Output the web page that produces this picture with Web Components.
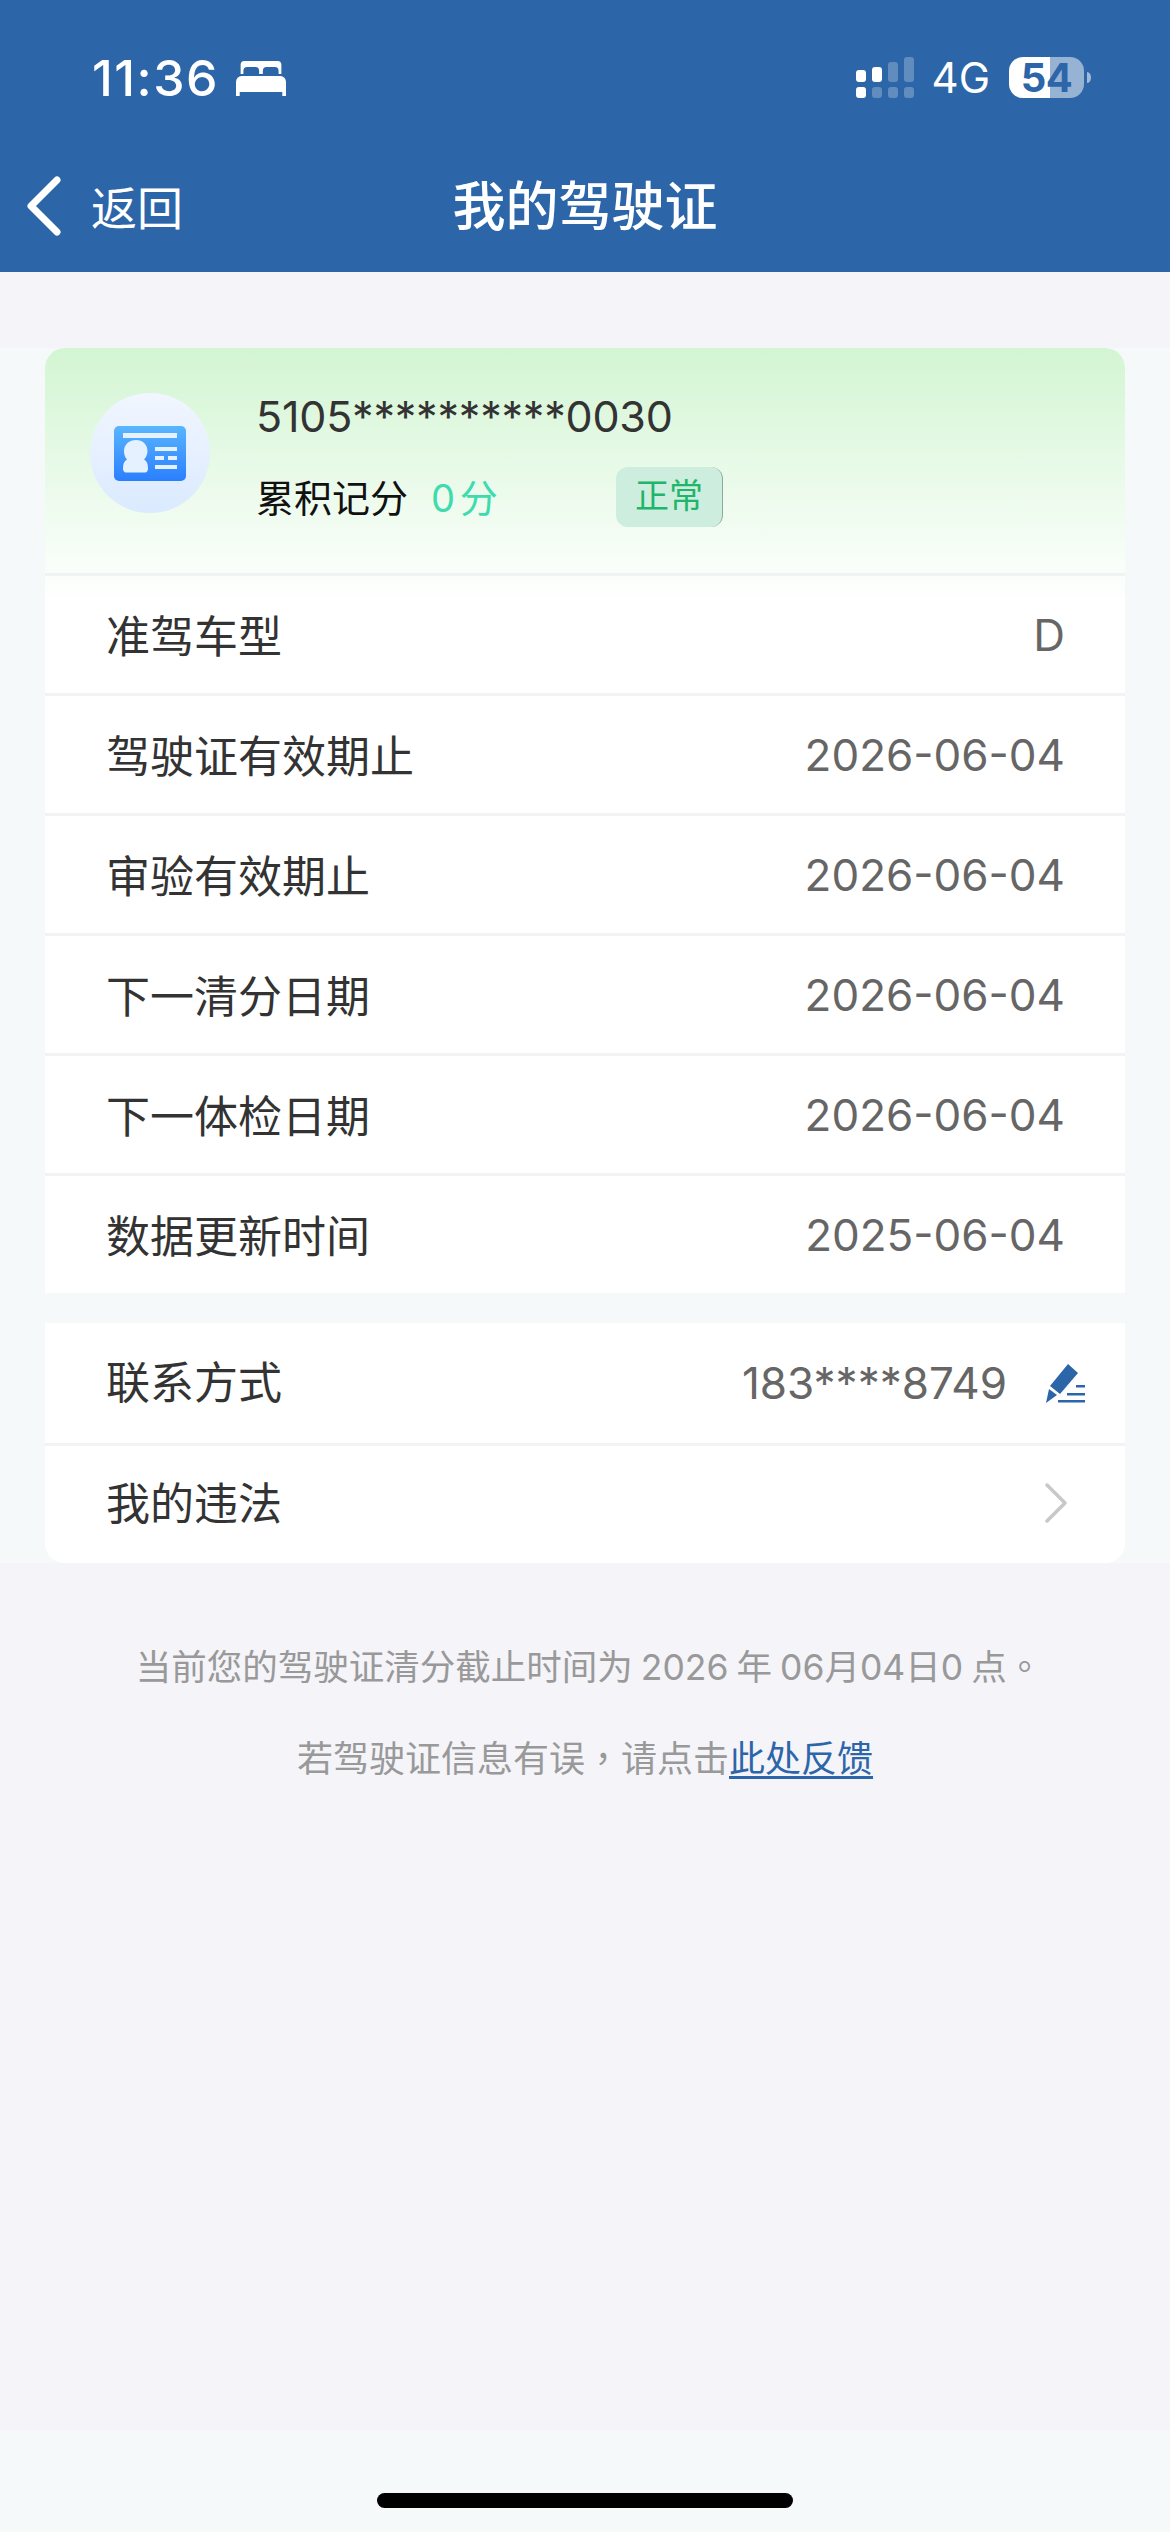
<!DOCTYPE html>
<html lang="zh-CN">
<head>
<meta charset="utf-8">
<title>我的驾驶证</title>
<style>
    html, body { margin: 0; padding: 0; }
    body {
        width: 1170px;
        height: 2532px;
        display: flex;
        flex-direction: column;
        background: #f4f4f9;
        font-family: Inter, "Noto Sans CJK SC", sans-serif;
        overflow: hidden;
    }
    foot-note a { color: #2c66a9; text-decoration: underline; text-underline-offset: 4px; }
    foot-note b { font-weight: 400; font-family: "Noto Sans CJK TC", sans-serif; }
</style>
</head>
<body>
<top-header title="我的驾驶证"></top-header>
<license-panel>
    <license-summary number="5105**********0030" score="0" unit="分" state="正常"></license-summary>
    <info-row first>准驾车型<span slot="value">D</span></info-row>
    <info-row>驾驶证有效期止<span slot="value">2026-06-04</span></info-row>
    <info-row>审验有效期止<span slot="value">2026-06-04</span></info-row>
    <info-row>下一清分日期<span slot="value">2026-06-04</span></info-row>
    <info-row>下一体检日期<span slot="value">2026-06-04</span></info-row>
    <info-row last>数据更新时间<span slot="value">2025-06-04</span></info-row>
    <info-row slot="contact" kind="edit">联系方式<span slot="value">183****8749</span></info-row>
    <info-row slot="contact" kind="link" last>我的违法</info-row>
</license-panel>
<foot-note>
    <span>当前您的驾驶证清分截止时间为 2026 年 06月04日0 点<b lang="zh-TW">。</b></span>
    <span slot="second">若驾驶证信息有误<b lang="zh-TW">，</b>请点击<a href="#">此处反馈</a></span>
</foot-note>
<home-bar></home-bar>

<script>
class TopHeader extends HTMLElement {
    constructor() {
        super();
        let el = this;
        const shadowRoot = el.attachShadow({ mode: 'open' });
        shadowRoot.innerHTML = `
            <style>
                :host { display: block; height: 272px; background: #2c66a9; color: #fff; flex: none; }
                .status { height: 170px; box-sizing: border-box; padding: 50px 79px 0 92px; display: flex; align-items: flex-start; }
                .time { font-size: 50px; font-weight: 500; line-height: 56px; letter-spacing: 1.5px; }
                .bed { margin: 11px 0 0 17px; }
                .right { margin-left: auto; display: flex; align-items: flex-start; }
                .net { font-size: 42px; line-height: 44px; margin: 6px 19px 0 18px; }
                .battery { width: 75px; height: 41px; margin-top: 7px; border-radius: 14px;
                    background: linear-gradient(90deg, #fff 41px, rgba(255,255,255,.5) 41px);
                    color: #2c66a9; font-size: 40px; font-weight: 700; line-height: 41px; text-align: center; letter-spacing: -0.5px; }
                .tip { margin: 22px 0 0 3px; }
                .nav { position: relative; height: 102px; }
                .back { display: flex; align-items: flex-start; margin-left: 25px; padding-top: 6px; }
                .back span { font-size: 46px; margin: 2px 0 0 30px; line-height: 60px; }
                .title { position: absolute; left: 0; right: 0; top: 0; text-align: center; font-size: 53px; font-weight: 500; line-height: 74px; }
            </style>
            <div class="status">
                <span class="time">11:36</span>
                <svg class="bed" width="50" height="35" viewBox="0 0 54 35" preserveAspectRatio="none" fill="#fff">
                    <path fill-rule="evenodd" d="M9 0h36a4 4 0 0 1 4 4v9h-3v-3a4 4 0 0 0-4-4h-9a4 4 0 0 0-4 4v3h-4v-3a4 4 0 0 0-4-4h-9a4 4 0 0 0-4 4v3H5V4a4 4 0 0 1 4-4z"/>
                    <path d="M6 15h42a6 6 0 0 1 6 6v14h-4v-4H4v4H0V21a6 6 0 0 1 6-6z"/>
                </svg>
                <div class="right">
                    <svg width="58" height="41" viewBox="0 0 58 41" fill="#fff" style="margin-top:7px">
                        <rect x="0" y="13" width="10" height="12" rx="3"/>
                        <rect x="16" y="10" width="10" height="15" rx="3"/>
                        <rect x="32" y="5" width="10" height="20" rx="3" opacity=".25"/>
                        <rect x="48" y="0" width="10" height="25" rx="3" opacity=".25"/>
                        <rect x="0" y="30" width="10" height="11" rx="3"/>
                        <rect x="16" y="30" width="10" height="11" rx="3" opacity=".25"/>
                        <rect x="32" y="30" width="10" height="11" rx="3" opacity=".25"/>
                        <rect x="48" y="30" width="10" height="11" rx="3" opacity=".25"/>
                    </svg>
                    <span class="net">4G</span>
                    <div class="battery">54</div>
                    <svg class="tip" width="4" height="11" viewBox="0 0 4 11" fill="#fff" opacity=".55"><path d="M0 0a4 5.5 0 0 1 0 11z"/></svg>
                </div>
            </div>
            <div class="nav">
                <div class="back">
                    <svg width="36" height="60" viewBox="0 0 36 60" fill="none" stroke="#fff" stroke-width="7" stroke-linecap="round" stroke-linejoin="round"><path d="M32 4 6 30l26 26" /></svg>
                    <span>返回</span>
                </div>
                <div class="title">${el.getAttribute('title')}</div>
            </div>
        `;
    }
}

class LicensePanel extends HTMLElement {
    constructor() {
        super();
        const shadowRoot = this.attachShadow({ mode: 'open' });
        shadowRoot.innerHTML = `
            <style>
                :host { display: block; flex: none; margin-top: 76px; padding: 0 45px; background: #f5f9f9; }
                .main { background: #fff; border-radius: 20px 20px 0 0; overflow: hidden; }
                .contact { margin-top: 30px; background: #fff; border-radius: 0 0 20px 20px; overflow: hidden; }
            </style>
            <div class="main"><slot></slot></div>
            <div class="contact"><slot name="contact"></slot></div>
        `;
    }
}

class LicenseSummary extends HTMLElement {
    constructor() {
        super();
        let el = this;
        const shadowRoot = el.attachShadow({ mode: 'open' });
        shadowRoot.innerHTML = `
            <style>
                :host { display: flex; box-sizing: border-box; height: 228px; padding: 45px 0 0 45px;
                    background: linear-gradient(180deg, #d3f5d3 0%, #fafefa 100%); border-bottom: 3px solid #eff3f2; }
                .avatar { width: 120px; height: 120px; border-radius: 50%; flex: none; display: flex; align-items: center; justify-content: center;
                    background: linear-gradient(180deg, #f1f6ff, #dbeaff); }
                .info { margin-left: 46px; }
                .number { font-size: 43px; line-height: 54px; color: #333; margin-top: -4px; letter-spacing: -0.2px; }
                .line { display: flex; align-items: center; height: 60px; margin-top: 22px; }
                .label { font-size: 38px; color: #111; width: 175px; }
                .score { font-size: 38px; color: #3ddbad; width: 185px; word-spacing: -6px; }
                .state { width: 107px; height: 60px; margin-top: 4px; box-sizing: border-box; border-radius: 12px; border-right: 1px solid #8fa89b; background: #cdeddf;
                    color: #1fb56a; font-size: 34px; line-height: 58px; text-align: center; }
            </style>
            <div class="avatar">
                <svg width="72" height="55" viewBox="0 0 72 55">
                    <defs><linearGradient id="card" x1="0" y1="0" x2="0" y2="1"><stop offset="0" stop-color="#5ab5ff"/><stop offset="1" stop-color="#2a7ffe"/></linearGradient></defs>
                    <rect width="72" height="55" rx="5" fill="url(#card)"/>
                    <g fill="#e6f1ff">
                        <rect x="9" y="7" width="54" height="5"/>
                        <path d="M22 14c6.500 0 11.500 4.500 11.500 11 0 3.500-1.500 6.500-3.500 8.500 3 1.500 4 5 4 9 0 2-1 4-3 4H12c-2 0-3-2-3-4 0-4 1-7.500 4-9-2-2-3-5-3-8.500 0-6.500 5.500-11 12-11z"/>
                        <rect x="41" y="21" width="22" height="4"/>
                        <rect x="41" y="30" width="9" height="4"/>
                        <rect x="54" y="30" width="9" height="4"/>
                        <rect x="41" y="39" width="22" height="4"/>
                    </g>
                </svg>
            </div>
            <div class="info">
                <div class="number">${el.getAttribute('number')}</div>
                <div class="line">
                    <span class="label">累积记分</span>
                    <span class="score">${el.getAttribute('score')} ${el.getAttribute('unit')}</span>
                    <span class="state">${el.getAttribute('state')}</span>
                </div>
            </div>
        `;
    }
}

class InfoRow extends HTMLElement {
    constructor() {
        super();
        let el = this;
        let kind = el.getAttribute('kind');
        let icon = '';
        if (kind === 'edit') {
            icon = `<svg class="icon" style="margin-left:39px;margin-right:-1px" width="39" height="39" viewBox="0 0 39 39" fill="#2c66a9">
                <path d="M22 0l10 9-18 21-10-8z"/><path d="M3 25l8 6-11 8z"/>
                <rect x="30" y="21" width="9" height="2.500"/><rect x="21" y="29" width="18" height="2.500"/><rect x="12" y="36" width="27" height="2.500"/>
            </svg>`;
        }
        if (kind === 'link') {
            icon = `<svg class="icon" style="margin:0 16px 3px 0" width="24" height="40" viewBox="0 0 24 40" fill="none" stroke="#c8c8c8" stroke-width="3.500" stroke-linecap="round" stroke-linejoin="round"><path d="M3 2l18 18L3 38"/></svg>`;
        }
        const shadowRoot = el.attachShadow({ mode: 'open' });
        shadowRoot.innerHTML = `
            <style>
                :host { display: flex; align-items: center; box-sizing: border-box; height: 120px; padding: 0 60px 0 61px;
                    background: #fff; border-bottom: 3px solid #f2f3f4; color: #333; font-size: 44px; }
                :host([first]) { background: linear-gradient(180deg, #fafefa, #fff 30px); }
                :host([last]) { height: 117px; border-bottom: 0; }
                :host([kind]) { padding-right: 41px; }
                :host([kind="edit"]) { height: 123px; }
                .label { margin-bottom: 2px; }
                :host([kind]) .label { margin-bottom: 7px; }
                .value { margin-left: auto; color: #666; font-size: 44px; display: flex; align-items: center; }
            </style>
            <div class="label"><slot></slot></div>
            <div class="value"><slot name="value"></slot>${icon}</div>
        `;
    }
}

class FootNote extends HTMLElement {
    constructor() {
        super();
        const shadowRoot = this.attachShadow({ mode: 'open' });
        shadowRoot.innerHTML = `
            <style>
                :host { display: block; flex: 1; padding-top: 77px; text-align: center; color: #999; font-size: 36px; line-height: 50px; word-spacing: -2px; }
                .first { padding-left: 8px; font-size: 35.5px; }
                .second { margin-top: 38px; }
                ::slotted(*) { white-space: nowrap; }
            </style>
            <div class="first"><slot></slot></div>
            <div class="second"><slot name="second"></slot></div>
        `;
    }
}

class HomeBar extends HTMLElement {
    constructor() {
        super();
        const shadowRoot = this.attachShadow({ mode: 'open' });
        shadowRoot.innerHTML = `
            <style>
                :host { display: flex; justify-content: center; flex: none; box-sizing: border-box; height: 102px; padding-top: 63px; background: #f5f9f9; }
                i { display: block; width: 416px; height: 15px; border-radius: 8px; background: #000; }
            </style>
            <i></i>
        `;
    }
}

window.customElements.define('top-header', TopHeader);
window.customElements.define('license-panel', LicensePanel);
window.customElements.define('license-summary', LicenseSummary);
window.customElements.define('info-row', InfoRow);
window.customElements.define('foot-note', FootNote);
window.customElements.define('home-bar', HomeBar);
</script>
</body>
</html>
